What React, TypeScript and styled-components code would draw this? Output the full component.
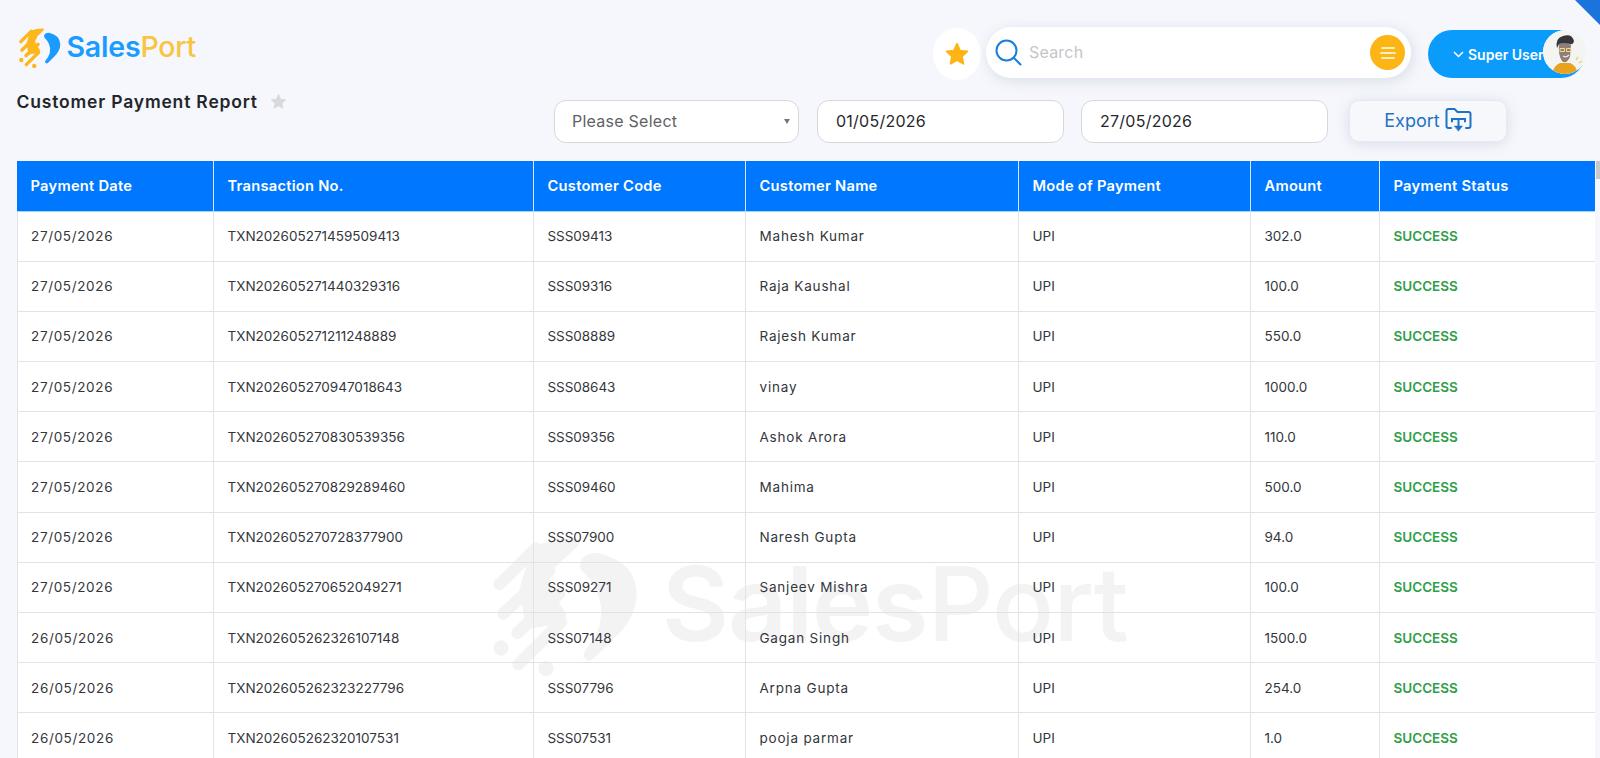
import React from "react";
import styled, { createGlobalStyle } from "styled-components";

const font = `Inter, "Noto Sans", "Liberation Sans", sans-serif`;

const GlobalStyle = createGlobalStyle`
  html, body {
    margin: 0;
    height: 100%;
    overflow: hidden;
    background: #f5f7fc;
    font-family: ${font};
  }
  * {
    box-sizing: border-box;
  }
`;

const rows = [
  ["27/05/2026", "TXN202605271459509413", "SSS09413", "Mahesh Kumar", "UPI", "302.0"],
  ["27/05/2026", "TXN202605271440329316", "SSS09316", "Raja Kaushal", "UPI", "100.0"],
  ["27/05/2026", "TXN202605271211248889", "SSS08889", "Rajesh Kumar", "UPI", "550.0"],
  ["27/05/2026", "TXN202605270947018643", "SSS08643", "vinay", "UPI", "1000.0"],
  ["27/05/2026", "TXN202605270830539356", "SSS09356", "Ashok Arora", "UPI", "110.0"],
  ["27/05/2026", "TXN202605270829289460", "SSS09460", "Mahima", "UPI", "500.0"],
  ["27/05/2026", "TXN202605270728377900", "SSS07900", "Naresh Gupta", "UPI", "94.0"],
  ["27/05/2026", "TXN202605270652049271", "SSS09271", "Sanjeev Mishra", "UPI", "100.0"],
  ["26/05/2026", "TXN202605262326107148", "SSS07148", "Gagan Singh", "UPI", "1500.0"],
  ["26/05/2026", "TXN202605262323227796", "SSS07796", "Arpna Gupta", "UPI", "254.0"],
  ["26/05/2026", "TXN202605262320107531", "SSS07531", "pooja parmar", "UPI", "1.0"],
];

// poppins runs wider than inter on dates and names, track those columns out
const tracking = [0.65, 0, -0.05, 0.8, 0, 0];

const columns = [
  { title: "Payment Date", width: 196.5 },
  { title: "Transaction No.", width: 320 },
  { title: "Customer Code", width: 212 },
  { title: "Customer Name", width: 273 },
  { title: "Mode of Payment", width: 232 },
  { title: "Amount", width: 129 },
  { title: "Payment Status", width: 216 },
];

const Page = styled.div`
  position: relative;
  height: 758px;
  padding-left: 16.5px;
  overflow: hidden;
`;

const Corner = styled.div`
  position: absolute;
  top: 0;
  right: 0;
  width: 25px;
  height: 25px;
  background: #1b74dc;
  clip-path: polygon(0 0, 100% 0, 100% 100%);
`;

const Header = styled.header`
  display: flex;
  justify-content: space-between;
  height: 161px;
  padding-top: 27px;
`;

const LeftCol = styled.div`
  display: flex;
  flex-direction: column;
`;

const Logo = styled.div`
  display: flex;
  align-items: center;
  gap: 4px;
  height: 41px;
  margin-top: -1px;
`;

const LogoText = styled.div`
  font-size: 28.5px;
  font-weight: 600;
  letter-spacing: -0.2px;
  color: #1a9bff;

  span {
    color: #f9c540;
    font-weight: 500;
  }
`;

const TitleRow = styled.div`
  display: flex;
  align-items: center;
  gap: 12px;
  margin-top: 24px;
`;

const Title = styled.h1`
  margin: 0;
  font-size: 17.5px;
  font-weight: 600;
  letter-spacing: 0.82px;
  color: #23252b;
`;

const RightCol = styled.div`
  display: flex;
  flex-direction: column;
  align-items: flex-end;
`;

const Toolbar = styled.div`
  display: flex;
  align-items: flex-start;
  height: 52px;
  padding-right: 15px;
`;

const StarButton = styled.div`
  display: flex;
  align-items: center;
  justify-content: center;
  width: 48px;
  height: 52px;
  margin-top: 1px;
  margin-right: 5px;
  border-radius: 50%;
  background: #fff;
`;

const SearchBar = styled.div`
  display: flex;
  align-items: center;
  width: 425px;
  height: 51px;
  padding: 0 6px 0 9px;
  border-radius: 26px;
  background: #fff;
  box-shadow: 2px 3px 14px rgba(120, 130, 160, 0.22);
`;

const SearchInput = styled.input`
  flex: 1;
  min-width: 0;
  margin-left: 7px;
  padding: 0 0 2px;
  border: 0;
  outline: 0;
  background: transparent;
  font-family: ${font};
  font-size: 16px;
  letter-spacing: 0.2px;

  &::placeholder {
    color: #c4c6ca;
  }
`;

const MenuButton = styled.div`
  display: flex;
  flex-direction: column;
  align-items: center;
  justify-content: center;
  gap: 3px;
  width: 35px;
  height: 35px;
  border-radius: 50%;
  background: #fdb515;
`;

const MenuLine = styled.i<{ $w: number }>`
  display: block;
  width: ${(p) => p.$w}px;
  height: 2px;
  border-radius: 1px;
  background: #ffedc2;
`;

const UserPill = styled.div`
  position: relative;
  display: flex;
  align-items: center;
  gap: 3px;
  width: 157px;
  height: 48px;
  margin-top: 3px;
  margin-left: 17px;
  padding-left: 24px;
  border-radius: 24px;
  background: #0a9bfb;
  color: #fff;
  font-size: 14px;
  font-weight: 600;
  white-space: nowrap;
`;

const Avatar = styled.div`
  position: absolute;
  top: 0;
  right: -2px;
  width: 44px;
  height: 44px;
  border-radius: 50%;
  background: #fff;
  overflow: hidden;
`;

const Filters = styled.div`
  display: flex;
  align-items: flex-start;
  gap: 17px;
  margin-top: 21px;
  padding-right: 93px;
`;

const SelectWrap = styled.div`
  position: relative;
  width: 245px;
  height: 43px;
  margin-right: 1px;

  &::after {
    content: "";
    position: absolute;
    top: 19px;
    right: 9px;
    border-style: solid;
    border-width: 5px 3.5px 0;
    border-color: #777 transparent transparent;
  }
`;

const Select = styled.select`
  width: 100%;
  height: 100%;
  padding: 0 17px 2px;
  border: 1px solid #d6d8dc;
  border-radius: 12px;
  appearance: none;
  outline: 0;
  background: #fff;
  color: #5f6165;
  font-family: ${font};
  font-size: 16px;
  letter-spacing: 0.25px;
`;

const DateInput = styled.input`
  width: 247px;
  height: 43px;
  padding: 0 18px 2px;
  border: 1px solid #d6d8dc;
  border-radius: 12px;
  outline: 0;
  background: #fff;
  color: #26282c;
  font-family: ${font};
  font-size: 16px;
  letter-spacing: 0.25px;
`;

const ExportButton = styled.button`
  display: flex;
  align-items: center;
  justify-content: center;
  gap: 5px;
  width: 158px;
  height: 42px;
  margin-left: 4px;
  padding: 0 0 2px;
  border: 1px solid #e6e9f0;
  border-radius: 10px;
  background: #f6f8fc;
  box-shadow: 0 2px 14px rgba(120, 130, 170, 0.22);
  color: #1f72c4;
  font-family: ${font};
  font-size: 18px;
`;

const Content = styled.div`
  display: flex;
  height: 597px;
`;

const TableArea = styled.div`
  position: relative;
  width: 1578.5px;
  background: #fff;
  overflow: hidden;
`;

const Watermark = styled.div`
  position: absolute;
  top: 362px;
  left: 469.5px;
  display: flex;
  align-items: center;
  gap: 16px;
`;

const WatermarkText = styled.div`
  font-size: 103px;
  font-weight: 600;
  letter-spacing: -1px;
  color: #f3f3f3;

  span {
    font-weight: 500;
  }
`;

const Table = styled.table`
  position: relative;
  width: 100%;
  border-collapse: collapse;
  table-layout: fixed;
`;

const Th = styled.th`
  height: 50px;
  padding: 0 13.5px;
  border-left: 1px solid #d9e6f5;
  border-bottom: 1px solid #9fd4ff;
  background: #0077ff;
  color: #fff;
  font-size: 14.7px;
  font-weight: 600;
  letter-spacing: 0.25px;
  text-align: left;
  white-space: nowrap;

  &:first-child {
    border-left: 0;
  }
`;

const Td = styled.td<{ $track?: number }>`
  height: 50.2px;
  padding: 0 13.5px;
  border: 1px solid #e0e3e7;
  border-top: 0;
  color: #33363b;
  font-size: 13.5px;
  letter-spacing: ${(p) => p.$track ?? 0}px;
  white-space: nowrap;
`;

const Status = styled(Td)`
  color: #2f9e4a;
  font-weight: 600;
`;

const ScrollTrack = styled.div`
  flex: 1;
  background: #f5f7fc;
`;

const ScrollThumb = styled.div`
  height: 18px;
  margin-left: 1px;
  background: #c9c9c9;
`;

const LogoMark: React.FC<{ size: number; left: string; right: string }> = ({ size, left, right }) => (
  <svg width={size} height={size} viewBox="0 0 480 480">
    <g fill={left}>
      <path d="M138 72 Q205 46 268 46 Q290 50 272 72 L208 132 Q175 175 204 218 L238 268 Q244 285 226 302 L120 318 L100 200 Z" />
      <g stroke={left} strokeWidth="36" strokeLinecap="round">
        <path d="M40 184 L150 76" />
        <path d="M52 272 L190 142" />
        <path d="M94 330 L220 212" />
        <path d="M97 424 L226 296" />
      </g>
      <circle cx="45" cy="375" r="23" />
      <circle cx="180" cy="437" r="23" />
    </g>
    <path
      fill={right}
      d="M282 128 Q282 92 335 90 Q450 115 452 215 Q450 285 385 345 L325 405 Q300 425 292 395 Q300 375 325 345 Q350 300 345 250 Q335 190 295 150 Q282 140 282 128 Z"
    />
  </svg>
);

const Star: React.FC<{ size: number; color: string }> = ({ size, color }) => (
  <svg width={size} height={size} viewBox="0 0 24 24">
    <path
      fill={color}
      stroke={color}
      strokeWidth="1.5"
      strokeLinejoin="round"
      d="M12 2.5l2.9 6.3 6.8.8-5 4.7 1.3 6.8-6-3.4-6 3.4 1.3-6.8-5-4.7 6.8-.8z"
    />
  </svg>
);

const SearchIcon = () => (
  <svg width="27" height="27" viewBox="0 0 27 27" fill="none" stroke="#1a7fdc" strokeWidth="2">
    <circle cx="11.5" cy="11.5" r="10" />
    <path d="M19 19l6.500 6.500" strokeLinecap="round" />
  </svg>
);

const Chevron = () => (
  <svg width="13" height="9" viewBox="0 0 13 9" fill="none" stroke="#fff" strokeWidth="1.5">
    <path d="M2 2l4.500 4.500L11 2" />
  </svg>
);

const FolderIcon = () => (
  <svg width="27" height="25" viewBox="0 0 27 25" fill="none" stroke="#1f72c4" strokeWidth="2" strokeLinecap="round">
    <path d="M6 20H3.500Q1.500 20 1.500 18V3Q1.500 1 3.500 1H9.500L12.500 4H23.500Q25.500 4 25.500 6V18Q25.500 20 23.500 20H21" />
    <path d="M7 13.500V11H20V13.500" />
    <path d="M13.500 12V18" />
    <path d="M9.500 18H17.500L13.500 23Z" fill="#1f72c4" strokeWidth="0.5" />
  </svg>
);

const AvatarArt = () => (
  <svg width="44" height="44" viewBox="0 0 44 44">
    <circle cx="22" cy="22" r="22" fill="#f4f4f2" />
    <path d="M9 44 Q11 35 17 33 L27 33 Q33 35 35 44 Z" fill="#e9a21e" />
    <path d="M16 14 Q22 10 28 15 L27 27 Q23 35 19 31 Q15 25 16 14 Z" fill="#8f7f76" />
    <path d="M14 18 Q12 8 20 6 Q29 3 31 11 Q30 15 27 14 Q21 12 16 14 Z" fill="#37363a" />
    <path d="M17 18.500h4.500v3H17zM23.500 18.500H28v3h-4.500z" fill="none" stroke="#f3d98a" strokeWidth="1" />
    <path d="M20 26 Q23 28 26 25" fill="none" stroke="#efe7d8" strokeWidth="1.200" />
    <path d="M33 30l2 -3M36 33l3 -2" stroke="#f2d26a" strokeWidth="1.500" />
  </svg>
);

function App() {
  return (
    <Page>
      <GlobalStyle />
      <Corner />
      <Header>
        <LeftCol>
          <Logo>
            <LogoMark size={46} left="#fdb71c" right="#1a9bff" />
            <LogoText>
              Sales<span>Port</span>
            </LogoText>
          </Logo>
          <TitleRow>
            <Title>Customer Payment Report</Title>
            <Star size={17} color="#d9d9d9" />
          </TitleRow>
        </LeftCol>
        <RightCol>
          <Toolbar>
            <StarButton>
              <Star size={26} color="#fdb515" />
            </StarButton>
            <SearchBar>
              <SearchIcon />
              <SearchInput placeholder="Search" />
              <MenuButton>
                <MenuLine $w={14} />
                <MenuLine $w={16} />
                <MenuLine $w={14} />
              </MenuButton>
            </SearchBar>
            <UserPill>
              <Chevron />
              Super User
              <Avatar>
                <AvatarArt />
              </Avatar>
            </UserPill>
          </Toolbar>
          <Filters>
            <SelectWrap>
              <Select defaultValue="">
                <option value="">Please Select</option>
              </Select>
            </SelectWrap>
            <DateInput defaultValue="01/05/2026" />
            <DateInput defaultValue="27/05/2026" />
            <ExportButton>
              Export
              <FolderIcon />
            </ExportButton>
          </Filters>
        </RightCol>
      </Header>
      <Content>
        <TableArea>
          <Watermark>
            <LogoMark size={160} left="#f3f3f3" right="#f3f3f3" />
            <WatermarkText>
              Sales<span>Port</span>
            </WatermarkText>
          </Watermark>
          <Table>
            <colgroup>
              {columns.map((c) => (
                <col key={c.title} style={{ width: c.width }} />
              ))}
            </colgroup>
            <thead>
              <tr>
                {columns.map((c) => (
                  <Th key={c.title}>{c.title}</Th>
                ))}
              </tr>
            </thead>
            <tbody>
              {rows.map((r) => (
                <tr key={r[1]}>
                  {r.map((cell, i) => (
                    <Td key={i} $track={tracking[i]}>
                      {cell}
                    </Td>
                  ))}
                  <Status>SUCCESS</Status>
                </tr>
              ))}
            </tbody>
          </Table>
        </TableArea>
        <ScrollTrack>
          <ScrollThumb />
        </ScrollTrack>
      </Content>
    </Page>
  );
}

export default App;
